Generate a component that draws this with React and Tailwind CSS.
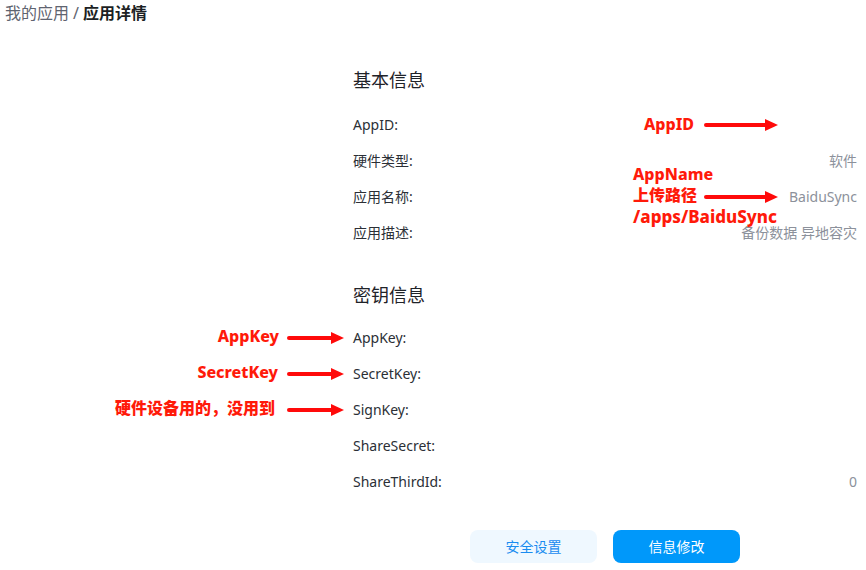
import React from 'react'

const FONT = '"Noto Sans", "Noto Sans CJK SC", sans-serif'

const BASIC = [
  { label: 'AppID:', value: '' },
  { label: '硬件类型:', value: '软件' },
  { label: '应用名称:', value: 'BaiduSync' },
  { label: '应用描述:', value: '备份数据 异地容灾' },
]

const KEYS = [
  { label: 'AppKey:', value: '' },
  { label: 'SecretKey:', value: '' },
  { label: 'SignKey:', value: '' },
  { label: 'ShareSecret:', value: '' },
  { label: 'ShareThirdId:', value: '0' },
]

function Arrow({ width = 74 }) {
  return (
    <svg width={width} height="14" viewBox={`0 0 ${width} 14`}>
      <rect x="0" y="5" width={width - 10} height="4" rx="2" fill="#ff0a0a" />
      <polygon points={`${width - 13},1 ${width},7 ${width - 13},13`} fill="#ff0a0a" />
    </svg>
  )
}

function Row({ label, value }) {
  return (
    <div className="h-9 flex items-center justify-between text-[14px]">
      <span className="text-[#2b2f36]">{label}</span>
      <span className="text-[#8c919b]">{value}</span>
    </div>
  )
}

// red annotation overlays: text with an arrow pointing at a field
function Note({ children, className }) {
  return (
    <div className={`absolute text-[16px] font-extrabold leading-[21px] text-[#ff1a0a] ${className}`}>
      {children}
    </div>
  )
}

export default function App() {
  return (
    <div className="relative w-[866px] h-[570px] bg-white overflow-hidden" style={{ fontFamily: FONT }}>
      <div className="h-[26px] flex items-center pl-[5px] text-[16px]">
        <span className="text-[#5f6470]">我的应用</span>
        <span className="text-[#5f6470] mx-1">/</span>
        <span className="font-bold text-[#1c1f24]">应用详情</span>
      </div>

      <div className="ml-[353px] mr-[9px]">
        <h2 className="mt-[42px] h-6 leading-6 text-[18px] text-[#1f2329]">基本信息</h2>
        <div className="mt-[14px]">
          {BASIC.map(r => <Row key={r.label} {...r} />)}
        </div>

        <h2 className="mt-[33px] h-6 leading-6 text-[18px] text-[#1f2329]">密钥信息</h2>
        <div className="mt-[12px] flex flex-col">
          {KEYS.map(r => <Row key={r.label} {...r} />)}
        </div>

        <div className="mt-[31px] flex justify-center gap-4">
          <button className="w-[127px] h-[33px] rounded-lg bg-[#eff8ff] text-[#1a8cf0] text-[14px]">安全设置</button>
          <button className="w-[127px] h-[33px] rounded-lg bg-[#0098fa] text-white text-[14px]">信息修改</button>
        </div>
      </div>

      <Note className="left-[644px] top-[114px]">AppID</Note>
      <div className="absolute left-[704px] top-[118px]"><Arrow /></div>

      <div className="absolute left-[633px] top-[164px] flex flex-col text-[16px] font-extrabold leading-[21px] text-[#ff1a0a]">
        <span>AppName</span>
        <span>上传路径</span>
        <span className="text-[17px]">/apps/BaiduSync</span>
      </div>
      <div className="absolute left-[704px] top-[190px]"><Arrow /></div>

      <Note className="right-[587px] top-[326px]">AppKey</Note>
      <div className="absolute left-[287px] top-[331px]"><Arrow width={57} /></div>

      <Note className="right-[588px] top-[362px]">SecretKey</Note>
      <div className="absolute left-[287px] top-[367px]"><Arrow width={57} /></div>

      <Note className="right-[591px] top-[398px]">硬件设备用的，没用到</Note>
      <div className="absolute left-[287px] top-[403px]"><Arrow width={57} /></div>
    </div>
  )
}
